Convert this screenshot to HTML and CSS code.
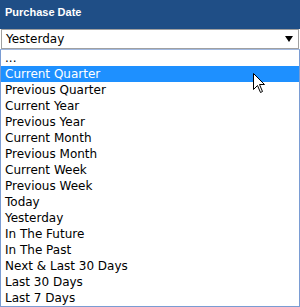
FILE: index.html
```html
<!DOCTYPE html>
<html lang="en">
<head>
    <meta charset="UTF-8">
    <title>Purchase Date</title>
    <link rel="stylesheet" href="styles.css">
</head>
<body>
    <header class="panel-title">Purchase Date</header>
    <div class="select-box">
        <span class="select-value">Yesterday</span>
        <span class="select-arrow"></span>
    </div>
    <ul class="option-list">
        <li>...</li>
        <li class="selected">Current Quarter</li>
        <li>Previous Quarter</li>
        <li>Current Year</li>
        <li>Previous Year</li>
        <li>Current Month</li>
        <li>Previous Month</li>
        <li>Current Week</li>
        <li>Previous Week</li>
        <li>Today</li>
        <li>Yesterday</li>
        <li>In The Future</li>
        <li>In The Past</li>
        <li>Next &amp; Last 30 Days</li>
        <li>Last 30 Days</li>
        <li>Last 7 Days</li>
    </ul>
    <svg class="cursor" width="13" height="21" viewBox="0 0 13 21">
        <path d="M0.5 0.5 L0.5 16.5 L4.5 12.5 L7.5 19.5 L9.5 18.5 L6.5 11.5 L11.5 11.5 Z" fill="#fff" stroke="#000" stroke-width="1"/>
    </svg>
</body>
</html>
```

FILE: styles.css
```css
body {
    margin: 0;
    width: 300px;
    height: 307px;
    background-color: #fff;
    font-family: 'DejaVu Sans', Verdana, sans-serif;
    position: relative;
    overflow: hidden;
}
.panel-title {
    background-color: #1f4e86;
    color: #fff;
    height: 29px;
    padding-left: 5px;
    font-family: 'Liberation Sans', Arial, sans-serif;
    font-size: 11px;
    font-weight: bold;
    line-height: 24px;
}
.select-box {
    display: flex;
    align-items: center;
    justify-content: space-between;
    height: 18px;
    margin: 0 1px;
    padding: 0 5px 0 4px;
    border: 1px solid #a0a0a0;
    font-size: 12px;
    color: #000;
}
.select-arrow {
    width: 0;
    height: 0;
    border-left: 4px solid transparent;
    border-right: 4px solid transparent;
    border-top: 6px solid #000;
}
.option-list {
    list-style: none;
    margin: 0;
    padding: 0;
    border: 1px solid #7a9cd3;
    border-top-color: #a0b8e0;
}
.option-list li {
    height: 16px;
    line-height: 16px;
    padding-left: 4px;
    font-size: 12px;
    color: #000;
}
.option-list li.selected {
    background-color: #1e90ff;
    color: #fff;
}
.cursor {
    position: absolute;
    left: 253px;
    top: 73px;
}
```
